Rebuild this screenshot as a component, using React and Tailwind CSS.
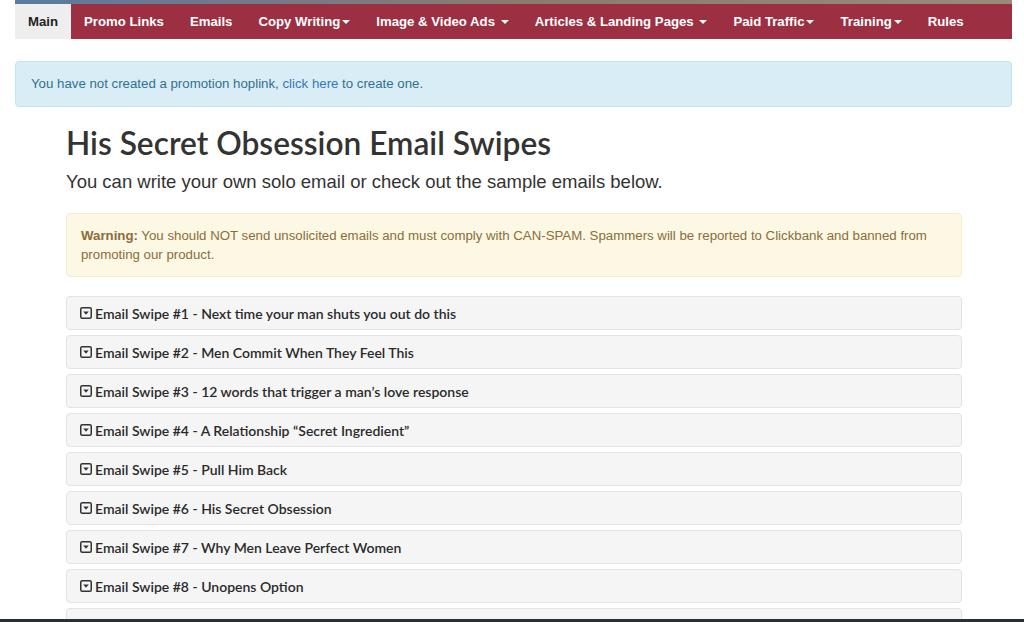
import React from "react";

const navItems = [
  { label: "Main", active: true },
  { label: "Promo Links" },
  { label: "Emails" },
  { label: "Copy Writing", caret: true },
  { label: "Image & Video Ads", caret: true, space: true },
  { label: "Articles & Landing Pages", caret: true, space: true },
  { label: "Paid Traffic", caret: true },
  { label: "Training", caret: true },
  { label: "Rules" },
];

const swipes = [
  "Email Swipe #1 - Next time your man shuts you out do this",
  "Email Swipe #2 - Men Commit When They Feel This",
  "Email Swipe #3 - 12 words that trigger a man\u2019s love response",
  "Email Swipe #4 - A Relationship \u201cSecret Ingredient\u201d",
  "Email Swipe #5 - Pull Him Back",
  "Email Swipe #6 - His Secret Obsession",
  "Email Swipe #7 - Why Men Leave Perfect Women",
  "Email Swipe #8 - Unopens Option",
  "Email Swipe #9 - 12 Word Text",
];

function Caret() {
  return (
    <span className="inline-block w-0 h-0 ml-[2px] align-middle border-t-[4px] border-t-white border-x-[4px] border-x-transparent"></span>
  );
}

function CollapseIcon() {
  return (
    <svg width="12" height="12" viewBox="0 0 12 12" className="mr-[3px] shrink-0">
      <rect x="0.75" y="0.75" width="10.5" height="10.5" rx="1.5" fill="none" stroke="#333" strokeWidth="1.5" />
      <path d="M3.2 4.4 L8.8 4.4 L6 7.8 Z" fill="#333" />
    </svg>
  );
}

export default function App() {
  return (
    <div className="min-h-screen bg-white font-['Liberation_Sans',Arial,sans-serif] text-[#333]">
      <div className="ml-[15px] w-[997px]">
        <div className="h-[4px] bg-gradient-to-r from-[#5a7aa0] via-[#8a7a70] to-[#9a8a7a]"></div>
        <nav className="flex h-[35px] bg-[#9c2f42]">
          {navItems.map((item) => (
            <a
              key={item.label}
              className={`flex shrink-0 items-center whitespace-nowrap px-[13px] text-[13.2px] font-bold ${
                item.active ? "bg-[#eeeeee] text-[#222]" : "text-white"
              }`}
            >
              {item.label}
              {item.space && <span>&nbsp;</span>}
              {item.caret && <Caret />}
            </a>
          ))}
        </nav>

        <div className="mt-[22px] h-[46px] flex items-center px-[15px] bg-[#d9edf7] border border-[#bce8f1] rounded-[4px] text-[13.25px] text-[#31708f]">
          <span>
            You have not created a promotion hoplink,{" "}
            <a className="text-[#337ab7]">click here</a> to create one.
          </span>
        </div>
      </div>

      <div className="mx-[66px] w-[896px]">
        <h1 className="mt-[16px] font-['Lato',sans-serif] font-semibold text-[31.7px] leading-[40px] text-[#333]">
          His Secret Obsession Email Swipes
        </h1>
        <p className="mt-[7px] text-[18.5px] leading-[24px] text-[#333]">
          You can write your own solo email or check out the sample emails below.
        </p>

        <div className="mt-[19px] px-[14px] py-[12px] bg-[#fcf8e3] border border-[#faebcc] rounded-[4px] text-[13.25px] leading-[19px] text-[#8a6d3b]">
          <strong>Warning:</strong> You should NOT send unsolicited emails and must comply with CAN-SPAM. Spammers will be reported to Clickbank and banned from promoting our product.
        </div>

        <div className="mt-[19px] flex flex-col gap-[5px]">
          {swipes.map((s) => (
            <div
              key={s}
              className="h-[34px] flex items-center px-[13px] bg-[#f5f5f5] border border-[#e3e3e3] rounded-[4px] font-['Lato',sans-serif] font-semibold text-[14px] text-[#2a2a2a]"
            >
              <CollapseIcon />
              {s}
            </div>
          ))}
        </div>
      </div>

      <div className="fixed bottom-0 left-0 right-0 h-[3px] bg-[#2b2f33]"></div>
    </div>
  );
}
